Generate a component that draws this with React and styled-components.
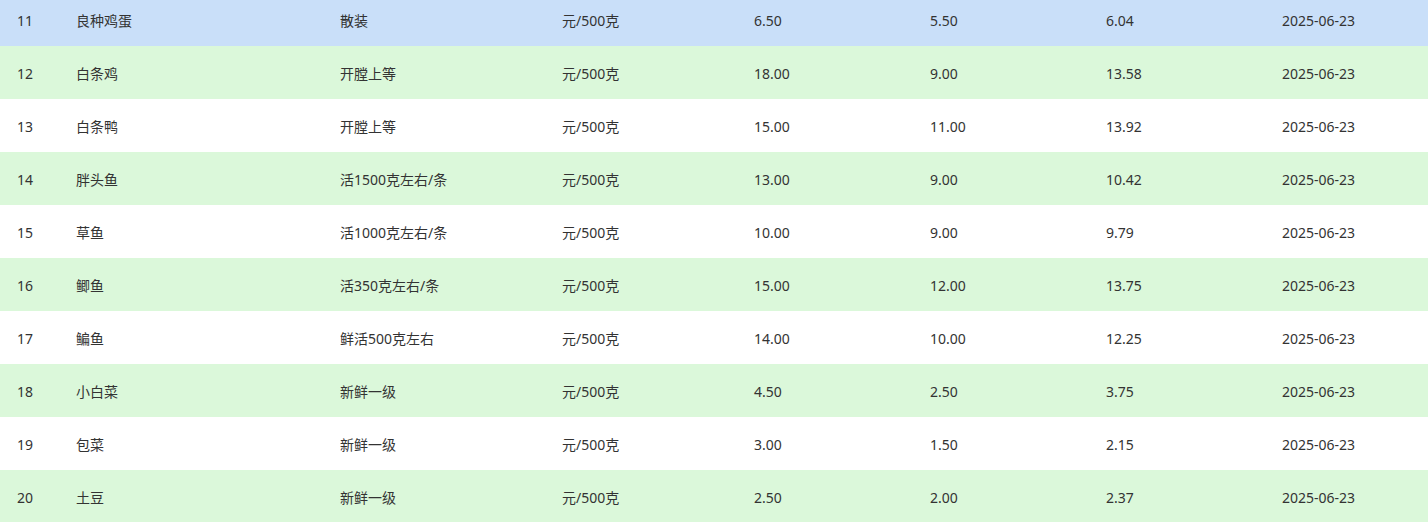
import React from 'react';
import styled, { createGlobalStyle } from 'styled-components';

const GlobalStyle = createGlobalStyle`
    html, body {
        margin: 0;
        padding: 0;
        background: #fff;
        overflow: hidden;
    }
    body {
        font-family: "Noto Sans", "Noto Sans CJK SC", sans-serif;
        font-size: 14px;
        color: #333;
    }
`

const rows = [
    ['11', '良种鸡蛋', '散装', '元/500克', '6.50', '5.50', '6.04', '2025-06-23'],
    ['12', '白条鸡', '开膛上等', '元/500克', '18.00', '9.00', '13.58', '2025-06-23'],
    ['13', '白条鸭', '开膛上等', '元/500克', '15.00', '11.00', '13.92', '2025-06-23'],
    ['14', '胖头鱼', '活1500克左右/条', '元/500克', '13.00', '9.00', '10.42', '2025-06-23'],
    ['15', '草鱼', '活1000克左右/条', '元/500克', '10.00', '9.00', '9.79', '2025-06-23'],
    ['16', '鲫鱼', '活350克左右/条', '元/500克', '15.00', '12.00', '13.75', '2025-06-23'],
    ['17', '鳊鱼', '鲜活500克左右', '元/500克', '14.00', '10.00', '12.25', '2025-06-23'],
    ['18', '小白菜', '新鲜一级', '元/500克', '4.50', '2.50', '3.75', '2025-06-23'],
    ['19', '包菜', '新鲜一级', '元/500克', '3.00', '1.50', '2.15', '2025-06-23'],
    ['20', '土豆', '新鲜一级', '元/500克', '2.50', '2.00', '2.37', '2025-06-23'],
]

const rowColor = (index) => {
    if (index === 0) return '#c9dff9'
    return index % 2 === 1 ? '#dbf8da' : '#ffffff'
}

const App = () => {
    return (
        <>
            <GlobalStyle />
            <Table>
                {rows.map((row, i) => (
                    <Row key={row[0]} $bg={rowColor(i)}>
                        {row.map((cell, j) => (
                            <Cell key={j}>{cell}</Cell>
                        ))}
                    </Row>
                ))}
            </Table>
        </>
    );
};

const Table = styled.div`
    width: 1428px;
    margin-top: -7px;
`

const Row = styled.div`
    display: grid;
    grid-template-columns: 59px 264px 222px 192px 176px 176px 176px 1fr;
    height: 53px;
    align-items: center;
    background: ${(p) => p.$bg};
`

const Cell = styled.div`
    padding: 2px 0 0 17px;
    white-space: nowrap;
    line-height: 20px;
`

export default App;
